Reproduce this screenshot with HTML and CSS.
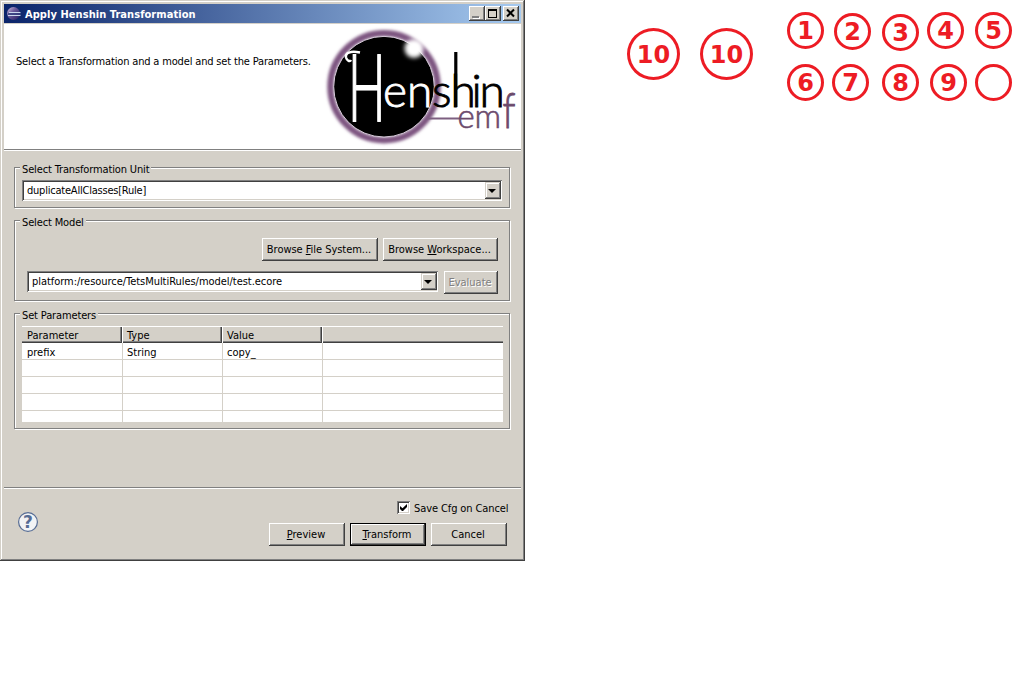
FILE: index.html
```html
<!DOCTYPE html>
<html lang="en">
<head>
<meta charset="utf-8">
<title>Apply Henshin Transformation</title>
<link rel="stylesheet" href="styles.css">
</head>
<body>
<main class="dialog">
  <header class="titlebar">
    <svg class="app-icon" width="16" height="16" viewBox="0 0 16 16">
      <defs><linearGradient id="ball" x1="0" y1="0" x2="1" y2="1"><stop offset="0" stop-color="#d9c6e0"/><stop offset=".4" stop-color="#6a5a9c"/><stop offset="1" stop-color="#241a60"/></linearGradient></defs>
      <circle cx="7.500" cy="7.500" r="6.500" fill="url(#ball)"/>
      <path d="M3 6.500h11.500M2 9.500h12.500" stroke="#c9d6ee" stroke-width="1"/>
      <path d="M2 8h13" stroke="#33407f" stroke-width="1.500"/>
    </svg>
    <h1 class="title">Apply Henshin Transformation</h1>
    <div class="winbtns">
      <div class="winbtn"><svg width="16" height="15"><path d="M4 11h7v2H4z" fill="#fff"/><path d="M3 10h7v2H3z" fill="#808080"/></svg></div>
      <div class="winbtn"><svg width="16" height="15"><path d="M3 3h9v9H3zM4 5v6h7V5z" fill="#000" fill-rule="evenodd"/></svg></div>
      <div class="winbtn close"><svg width="16" height="15"><path d="M4 3.500L11 10.500M11 3.500L4 10.500" stroke="#000" stroke-width="2"/></svg></div>
    </div>
  </header>
  <section class="banner">
    <p class="message">Select a Transformation and a model and set the Parameters.</p>
    <svg class="logo" width="206" height="125" viewBox="315 24 206 125">
      <defs>
        <filter id="soft" x="-20%" y="-20%" width="140%" height="140%"><feGaussianBlur stdDeviation="1.400"/></filter>
        <filter id="glow" x="-50%" y="-50%" width="200%" height="200%"><feGaussianBlur stdDeviation="2"/></filter>
      </defs>
      <circle cx="384" cy="86.700" r="53.500" fill="none" stroke="#7d5480" stroke-width="6.500" filter="url(#soft)"/>
      <circle cx="384" cy="86.700" r="50.300" fill="#000" stroke="#d8cadb" stroke-width="1"/>
      <circle cx="414" cy="48.500" r="9.500" fill="#fff" filter="url(#glow)"/>
      <path d="M360 52.500C350 50.500 345 53 346 57.500C347 61 350 62 351 60" fill="none" stroke="#fff" stroke-width="2.500"/>
      <text class="lg white" transform="translate(348 121) scale(1.080 2.020)">H</text>
      <text class="lg white" x="383 407" y="107">en</text>
      <text class="lg black" x="432 450.500 471.500 479.500" y="107">shin</text>
      <path d="M455.800 52v55" stroke="#000" stroke-width="3.200"/>
      <path d="M427 118.500h33" stroke="#7d5f80" stroke-width="2"/>
      <text class="emf" x="457.500 474.500" y="128">em</text>
      <text class="emf" transform="translate(502.500 128) scale(1.150 1.500)">f</text>
    </svg>
  </section>
  <section class="body">
    <div class="group g-unit">
      <h2 class="legend">Select Transformation Unit</h2>
      <div class="combo combo-unit"><span class="value tight">duplicateAllClasses[Rule]</span><span class="drop"><i class="tri"></i></span></div>
    </div>
    <div class="group g-model">
      <h2 class="legend">Select Model</h2>
      <div class="row browse">
        <button class="btn b-fs">Browse <u>F</u>ile System...</button>
        <button class="btn b-ws">Browse <u>W</u>orkspace...</button>
      </div>
      <div class="row">
        <div class="combo combo-model"><span class="value">platform:/resource/TetsMultiRules/model/test.ecore</span><span class="drop"><i class="tri"></i></span></div>
        <button class="btn b-eval">Evaluate</button>
      </div>
    </div>
    <div class="group g-params">
      <h2 class="legend">Set Parameters</h2>
      <div class="grid">
        <div class="th">Parameter</div><div class="th">Type</div><div class="th">Value</div><div class="th last"></div>
        <div class="td">prefix</div><div class="td">String</div><div class="td">copy_</div><div class="td last"></div>
        <div class="td"></div><div class="td"></div><div class="td"></div><div class="td last"></div>
        <div class="td"></div><div class="td"></div><div class="td"></div><div class="td last"></div>
        <div class="td"></div><div class="td"></div><div class="td"></div><div class="td last"></div>
        <div class="td end"></div><div class="td end"></div><div class="td end"></div><div class="td last end"></div>
      </div>
    </div>
  </section>
  <footer class="footer">
    <svg class="help" width="22" height="22" viewBox="0 0 22 22">
      <circle cx="11" cy="11" r="9.400" fill="#f2f3f5" stroke="#566c94" stroke-width="1.200"/>
      <text x="11" y="17.300" text-anchor="middle" class="help-mark">?</text>
    </svg>
    <div class="actions">
      <div class="check"><span class="box"><svg width="9" height="9"><path d="M1 3v3l2 2h1l4-4V1L3.500 5.300z" fill="#000"/></svg></span><span class="save">Save Cfg on Cancel</span></div>
      <div class="row">
        <button class="btn b-foot"><u>P</u>review</button>
        <button class="btn b-foot default"><u>T</u>ransform</button>
        <button class="btn b-foot">Cancel</button>
      </div>
    </div>
  </footer>
</main>
<div class="mark big m10a">10</div>
<div class="mark big m10b">10</div>
<div class="mark m1">1</div>
<div class="mark m2">2</div>
<div class="mark m3">3</div>
<div class="mark m4">4</div>
<div class="mark m5">5</div>
<div class="mark m6">6</div>
<div class="mark m7">7</div>
<div class="mark m8">8</div>
<div class="mark m9">9</div>
<div class="mark m0"></div>
</body>
</html>
```
FILE: styles.css
```css
* { box-sizing: border-box; }
body {
  margin: 0; width: 1023px; height: 688px; overflow: hidden; background: #fff; color: #000;
  font: 11px/13px "DejaVu Sans Condensed", "DejaVu Sans", sans-serif;
  font-stretch: condensed; position: relative;
}
h1, h2, p { margin: 0; font-size: 11px; font-weight: 400; }
u { text-decoration: underline; text-underline-offset: 1px; }
.dialog {
  width: 525px; height: 561px; padding: 4px; background: #d4d0c8;
  display: flex; flex-direction: column;
  box-shadow: inset -1px -1px #404040, inset 1px 1px #d4d0c8, inset -2px -2px #808080, inset 2px 2px #fff;
}
.titlebar {
  height: 19px; display: flex; align-items: center; padding: 0 2px;
  background: linear-gradient(90deg, #0a246a, #a6caf0); color: #fff; flex: none;
}
.title { flex: 1; font-weight: 700; padding: 1px 0 0 3px; white-space: nowrap; letter-spacing: 0.06px; }
.winbtns { display: flex; }
.winbtn { width: 16px; height: 15px; background: #d4d0c8; box-shadow: inset -1px -1px #404040, inset 1px 1px #fff, inset -2px -2px #808080; }
.winbtn svg { display: block; }
.winbtn.close { margin-left: 2px; }
.banner {
  height: 127px; flex: none; margin-top: 1px; background: #fff; display: flex; justify-content: space-between;
  border-bottom: 1px solid #fff; box-shadow: inset 0 -1px #808080;
}
.message { padding: 31px 0 0 12px; white-space: nowrap; letter-spacing: -0.16px; }
.logo { display: block; flex: none; }
.lg { font: 300 46px Lato, sans-serif; font-stretch: normal; stroke-width: 0.9px; }
.white { fill: #fff; stroke: #fff; }
.black { fill: #000; stroke: #000; }
.emf { font: 300 33px Lato, sans-serif; font-stretch: normal; fill: #6b4a6c; stroke: #6b4a6c; stroke-width: 0.6px; }
.body { padding: 16px 11px 0 10px; height: 336px; flex: none; }
.group {
  width: 496px; border: 1px solid #808080; box-shadow: 1px 1px #fff, inset 1px 1px #fff;
  display: flex; flex-direction: column; align-items: flex-start;
}
.legend {
  background: #d4d0c8; height: 13px; margin: -5px 0 0 5px; padding: 0 2px; white-space: nowrap;
  flex: none; letter-spacing: -0.14px;
}
.g-unit { height: 41px; }
.g-model { height: 81px; margin-top: 12px; }
.g-params { height: 116px; margin-top: 12px; }
.combo {
  height: 21px; background: #fff; padding: 2px 1px 2px 2px; display: flex; align-items: center;
  box-shadow: inset 1px 1px #808080, inset -1px -1px #fff, inset 2px 2px #404040, inset -2px -2px #d4d0c8;
}
.combo-unit { width: 480px; margin: 4px 0 0 7px; }
.combo-model { width: 411px; margin-left: 12px; }
.value { flex: 1; padding-left: 3px; white-space: nowrap; letter-spacing: -0.04px; }
.tight { letter-spacing: -0.22px; }
.drop {
  width: 16px; height: 17px; background: #d4d0c8; display: flex; align-items: center; justify-content: center;
  box-shadow: inset -1px -1px #404040, inset 1px 1px #d4d0c8, inset -2px -2px #808080, inset 2px 2px #fff;
}
.tri { border: 4px solid transparent; border-top-color: #000; border-bottom: 0; margin-right: 2px; }
.row { display: flex; }
.btn {
  height: 23px; border: 0; padding: 0; background: #d4d0c8; font: inherit; color: #000; white-space: nowrap;
  box-shadow: inset -1px -1px #404040, inset 1px 1px #fff, inset -2px -2px #808080;
}
.browse { margin: 9px 0 10px 247px; gap: 5px; }
.b-fs { width: 116px; padding-right: 2px; letter-spacing: -0.04px; }
.b-ws { width: 115px; padding-right: 2px; }
.b-eval { width: 54px; margin-left: 6px; padding-right: 2px; color: #808080; text-shadow: 1px 1px #fff; }
.grid {
  margin: 4px 0 0 7px; width: 481px; background: #fff;
  display: grid; grid-template-columns: 101px 100px 100px 180px; grid-template-rows: 17px repeat(4, 17px) 11px;
}
.th, .td { padding-left: 5px; white-space: nowrap; line-height: 19px; }
.th { background: #d4d0c8; box-shadow: inset -1px 0 #fff, inset 0 1px #fff, inset 0 -1px #404040, inset -2px 0 #404040, inset 0 -2px #808080, inset -3px 0 #808080; }
.th.last { box-shadow: inset 0 1px #fff, inset 0 -1px #404040, inset 0 -2px #808080; }
.td { border-right: 1px solid #d4d0c8; border-bottom: 1px solid #d4d0c8; }
.th + .th, .td + .td { padding-left: 4px; }
.td.last { border-right: 0; }
.td.end { border-bottom: 0; }
.footer {
  flex: 1; border-top: 1px solid #808080; box-shadow: inset 0 1px #fff;
  display: flex; justify-content: space-between; padding: 13px 11px 0 13px;
}
.help { margin-top: 10px; }
.help-mark { font: 700 17px "DejaVu Sans", sans-serif; fill: #566c94; }
.actions { width: 241px; }
.check { display: flex; align-items: center; gap: 4px; height: 13px; margin: 0 0 9px 128px; white-space: nowrap; }
.save { letter-spacing: -0.1px; padding-top: 2px; }
.box {
  width: 13px; height: 13px; background: #fff; padding: 2px; flex: none;
  box-shadow: inset 1px 1px #808080, inset -1px -1px #fff, inset 2px 2px #404040, inset -2px -2px #d4d0c8;
}
.box svg { display: block; }
.actions .row { gap: 5px; }
.b-foot { width: 76px; padding-right: 2px; }
.default { box-shadow: inset 0 0 0 1px #000, inset -2px -2px #404040, inset 2px 2px #fff, inset -3px -3px #808080; }
.mark {
  position: absolute; width: 37px; height: 37px; border: 3px solid #ed1c24; border-radius: 50%;
  display: flex; align-items: center; justify-content: center; color: #ed1c24;
  font: 700 24px/24px "DejaVu Sans", sans-serif; font-stretch: normal;
}
.big { width: 53px; height: 52px; padding-top: 1px; }
.m10a { left: 627px; top: 28px; }
.m10b { left: 700px; top: 28px; }
.m1 { left: 787px; top: 12px; }
.m2 { left: 834px; top: 13px; }
.m3 { left: 882px; top: 14px; }
.m4 { left: 927px; top: 12px; }
.m5 { left: 975px; top: 12px; }
.m6 { left: 787px; top: 64px; }
.m7 { left: 832px; top: 64px; }
.m8 { left: 882px; top: 64px; }
.m9 { left: 930px; top: 64px; }
.m0 { left: 975px; top: 64px; }
```
